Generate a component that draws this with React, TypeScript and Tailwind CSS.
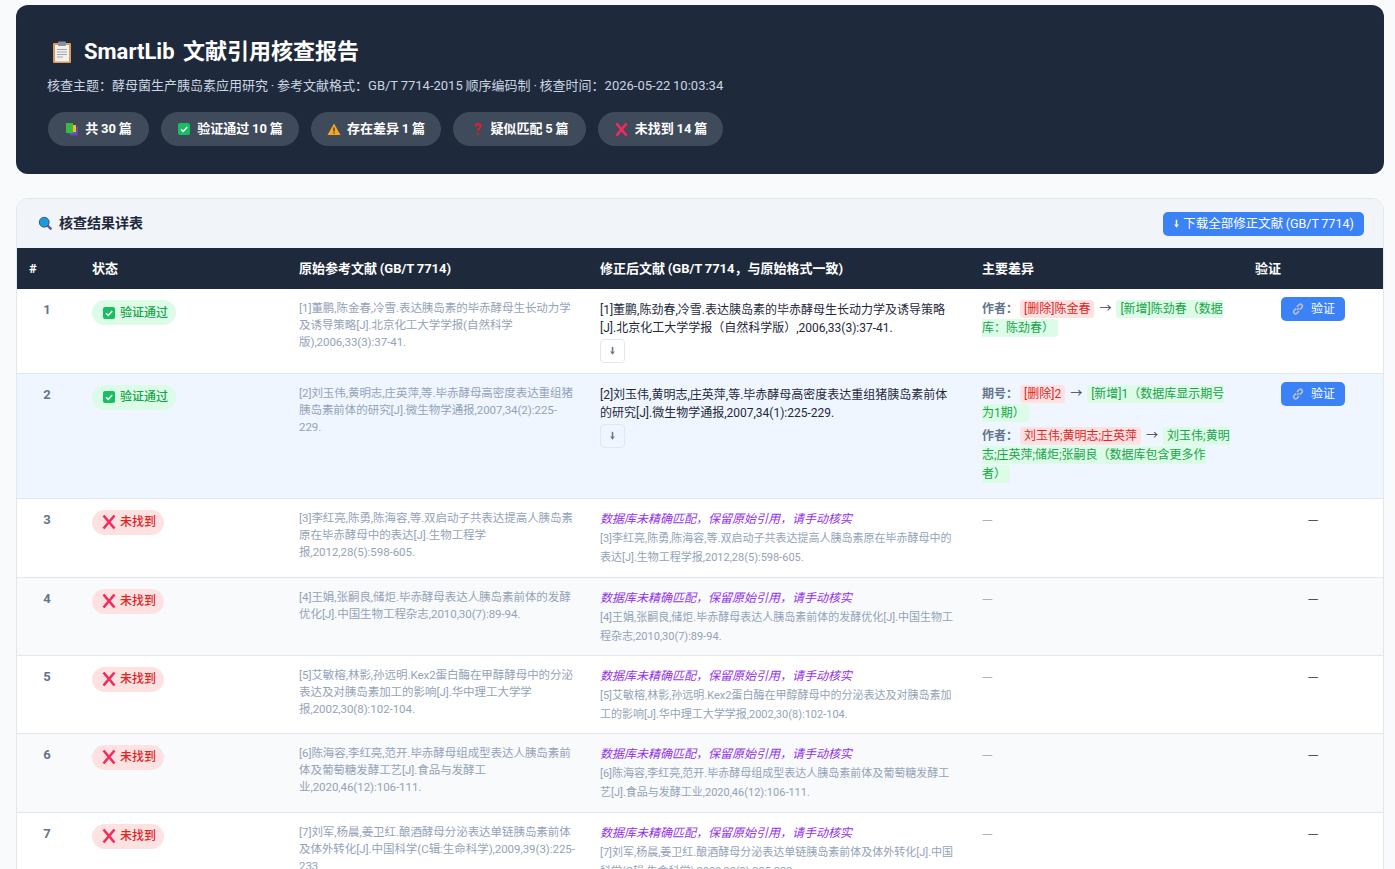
import React from "react";

const font = { fontFamily: 'Roboto, "Noto Sans CJK SC", sans-serif' };

function Clipboard({ className = "" }: { className?: string }) {
  return (
    <svg viewBox="0 0 20 22" className={className}>
      <rect x="1" y="2" width="18" height="20" rx="1" fill="#d99a5b" />
      <rect x="3" y="4" width="14" height="16.5" fill="#f1f1f1" />
      <rect x="6" y="0.5" width="8" height="4.5" rx="1" fill="#8a8f98" />
      <path d="M5 8.5h10M5 11h10M5 13.5h10M5 16h6" stroke="#a6a6a6" strokeWidth="1" />
    </svg>
  );
}
function Books() {
  return (
    <svg viewBox="0 0 14 14" className="w-[14px] h-[14px]">
      <rect x="5" y="5" width="8" height="8.5" fill="#7b3fa0" />
      <rect x="4" y="3.5" width="7" height="8.5" fill="#2f6fd0" />
      <rect x="1" y="1" width="7" height="10" fill="#3fb63f" />
      <rect x="8" y="3" width="3" height="7" fill="#e8c22f" />
    </svg>
  );
}
function CheckBox({ className = "w-[14px] h-[14px]" }: { className?: string }) {
  return (
    <svg viewBox="0 0 14 14" className={className}>
      <rect x="1" y="1" width="12" height="12" rx="2" fill="#16c060" />
      <path d="M4 7.2l2.2 2.2L10.2 5" stroke="#fff" strokeWidth="1.5" fill="none" />
    </svg>
  );
}
function Warn() {
  return (
    <svg viewBox="0 0 14 14" className="w-[14px] h-[14px]">
      <path d="M7 1.5L13.5 13H.5z" fill="#f5a623" />
      <path d="M7 5.5v4M7 10.5v1.3" stroke="#3a2a05" strokeWidth="1.2" />
    </svg>
  );
}
function Question() {
  return (
    <svg viewBox="0 0 14 14" className="w-[14px] h-[14px]">
      <path d="M4.5 4.6C4.5 3 5.6 2 7 2s2.6 1 2.6 2.4C9.6 6.2 7 6.4 7 8.8" stroke="#e0202e" strokeWidth="1.8" fill="none" />
      <circle cx="7" cy="11.6" r="1.2" fill="#e0202e" />
    </svg>
  );
}
function Cross({ className = "w-[16px] h-[16px]" }: { className?: string }) {
  return (
    <svg viewBox="0 0 16 16" className={className}>
      <path d="M2.5 1.5l11 13M13.5 1.5l-11 13" stroke="#f4295c" strokeWidth="2.6" />
    </svg>
  );
}
function Magnifier() {
  return (
    <svg viewBox="0 0 14 14" className="w-[15px] h-[15px]">
      <path d="M8.5 8.5l4 4" stroke="#6b5b95" strokeWidth="2.4" />
      <circle cx="5.8" cy="5.8" r="4.6" fill="#1a9be0" stroke="#3a4a5a" strokeWidth="0.8" />
    </svg>
  );
}
function LinkIcon() {
  return (
    <svg viewBox="0 0 14 14" className="w-[14px] h-[14px]" fill="none" stroke="#b4bcc9" strokeWidth="1.7">
      <path d="M6 8l2-2" />
      <path d="M5.2 6.4L3 8.6a2 2 0 0 0 2.8 2.8L8 9.2" />
      <path d="M6 4.8l2.2-2.2A2 2 0 0 1 11 5.4L8.8 7.6" />
    </svg>
  );
}
function DownArrow({ color = "#64748b" }: { color?: string }) {
  return (
    <svg viewBox="0 0 8 12" className="w-[7px] h-[10px]">
      <path d="M4 1v6" stroke={color} strokeWidth="1.8" />
      <path d="M1.2 6.5h5.6L4 10.5z" fill={color} />
    </svg>
  );
}

const pills: [React.ReactNode, string, string][] = [
  [<Books />, "共 30 篇", "w-[101px]"],
  [<CheckBox />, "验证通过 10 篇", "w-[138px]"],
  [<Warn />, "存在差异 1 篇", "w-[130px]"],
  [<Question />, "疑似匹配 5 篇", "w-[133px]"],
  [<Cross className="w-[15px] h-[15px]" />, "未找到 14 篇", "w-[125px]"],
];

const Del = ({ children }: { children: React.ReactNode }) => (
  <span className="bg-[#fee2e2] text-[#dc2626] px-[4px] py-[2px] rounded-[3px]">{children}</span>
);
const Add = ({ children }: { children: React.ReactNode }) => (
  <span className="bg-[#dcfce7] text-[#16a34a] px-[4px] py-[2px] rounded-[3px]">{children}</span>
);
const Arrow = () => <span className="text-[#334155] mx-[5px]">→</span>;
const Label = ({ children }: { children: React.ReactNode }) => (
  <span className="font-semibold text-[#64748b] mr-[2px]">{children}</span>
);

const VerifyBtn = () => (
  <button className="inline-flex items-center justify-center gap-[6px] h-[24px] w-[64px] rounded-[5px] bg-[#3b82f6] text-white text-[12px]">
    <LinkIcon />
    <span>验证</span>
  </button>
);

const DlBtn = () => (
  <button className="mt-[2px] flex items-center justify-center w-[25px] h-[24px] rounded-[4px] border border-[#e2e8f0] bg-transparent">
    <DownArrow />
  </button>
);

const Num = ({ n }: { n: number }) => (
  <td className="align-top pt-[11px] text-center text-[13px] font-bold text-[#64748b] pr-[3px]">{n}</td>
);

const Ok = () => (
  <span className="inline-flex items-center gap-[4px] h-[25px] pl-[10px] pr-[8px] rounded-full bg-[#dcfce7] text-[#16a34a] text-[12px] font-medium">
    <CheckBox />
    验证通过
  </span>
);
const No = () => (
  <span className="inline-flex items-center gap-[3px] h-[25px] pl-[9px] pr-[8px] rounded-full bg-[#fee2e2] text-[#dc2626] text-[12px] font-medium">
    <Cross />
    未找到
  </span>
);

const missing: [number, string, string, string][] = [
  [3, "bg-white", "[3]李红亮,陈勇,陈海容,等.双启动子共表达提高人胰岛素原在毕赤酵母中的表达[J].生物工程学报,2012,28(5):598-605.", "h-[79px]"],
  [4, "bg-[#f8fafc]", "[4]王娟,张嗣良,储炬.毕赤酵母表达人胰岛素前体的发酵优化[J].中国生物工程杂志,2010,30(7):89-94.", "h-[78px]"],
  [5, "bg-white", "[5]艾敏榕,林影,孙远明.Kex2蛋白酶在甲醇酵母中的分泌表达及对胰岛素加工的影响[J].华中理工大学学报,2002,30(8):102-104.", "h-[78px]"],
  [6, "bg-[#f8fafc]", "[6]陈海容,李红亮,范开.毕赤酵母组成型表达人胰岛素前体及葡萄糖发酵工艺[J].食品与发酵工业,2020,46(12):106-111.", "h-[79px]"],
  [7, "bg-white", "[7]刘军,杨晨,姜卫红.酿酒酵母分泌表达单链胰岛素前体及体外转化[J].中国科学(C辑:生命科学),2009,39(3):225-233.", "h-[79px]"],
];

const th = "text-left font-bold text-[13px] [word-spacing:-0.5px] text-white px-[12px]";
const origCell = "align-top px-[12px] pt-[11px] text-[11.5px] leading-[17px] tracking-[-0.05px] text-[#94a3b8]";
const fixedCell = "align-top px-[12px] pt-[12px] text-[12px] leading-[18px] text-[#1e293b]";
const diffCell = "align-top pl-[12px] pr-[13px] pt-[11px] text-[12px] leading-[19.2px] text-[#475569]";

export default function App() {
  return (
    <div style={font} className="h-[869px] overflow-hidden bg-[#f8fafc] pl-[16px] pr-[11px] pt-[5px]">
      <header className="h-[169px] rounded-[12px] bg-[#1e293b] px-[32px] pt-[31px]">
        <h1 className="flex items-center gap-[12px] pl-[4px] text-[22px] leading-[32px] font-bold text-white [word-spacing:3px]">
          <Clipboard className="w-[20px] h-[22px]" />
          SmartLib 文献引用核查报告
        </h1>
        <p className="mt-[8px] -ml-px text-[13px] leading-[20px] text-[#cbd5e1] [word-spacing:-0.4px]">
          核查主题：酵母菌生产胰岛素应用研究 · 参考文献格式：GB/T 7714-2015 顺序编码制 · 核查时间：2026-05-22 10:03:34
        </p>
        <div className="mt-[16px] flex gap-[12px]">
          {pills.map(([icon, text, w], i) => (
            <span
              key={i}
              className={`${w} flex items-center justify-center gap-[6px] h-[34px] rounded-full bg-[#3f4a5b] text-white text-[13px] font-bold [word-spacing:-0.5px]`}
            >
              {icon}
              {text}
            </span>
          ))}
        </div>
      </header>

      <section className="mt-[24px] rounded-[12px] border border-[#e2e8f0] bg-white overflow-hidden">
        <div className="h-[49px] flex items-center justify-between bg-[#f1f5f9] pl-[21px] pr-[19px]">
          <div className="flex items-center gap-[6px] text-[14px] font-bold text-[#1e293b]">
            <Magnifier />
            核查结果详表
          </div>
          <button className="flex items-center gap-[3px] h-[24px] w-[201px] justify-center rounded-[5px] bg-[#3b82f6] pt-[1px] text-white text-[12.5px] [word-spacing:-0.5px]">
            <DownArrow color="#fff" />
            下载全部修正文献 (GB/T 7714)
          </button>
        </div>

        <table className="w-full table-fixed border-collapse">
          <colgroup>
            <col className="w-[63px]" />
            <col className="w-[207px]" />
            <col className="w-[301px]" />
            <col className="w-[382px]" />
            <col className="w-[273px]" />
            <col />
          </colgroup>
          <thead>
            <tr className="h-[41px] bg-[#1e293b]">
              <th className={th}>#</th>
              <th className={th}>状态</th>
              <th className={th}>原始参考文献 (GB/T 7714)</th>
              <th className={th}>修正后文献 (GB/T 7714，与原始格式一致)</th>
              <th className={th}>主要差异</th>
              <th className={th}>验证</th>
            </tr>
          </thead>
          <tbody>
            <tr className="h-[84px] bg-white border-b border-[#e2e8f0]">
              <Num n={1} />
              <td className="align-top px-[12px] pt-[11px]"><Ok /></td>
              <td className={origCell}>[1]董鹏,陈金春,冷雪.表达胰岛素的毕赤酵母生长动力学及诱导策略[J].北京化工大学学报(自然科学版),2006,33(3):37-41.</td>
              <td className={fixedCell}>
                [1]董鹏,陈劲春,冷雪.表达胰岛素的毕赤酵母生长动力学及诱导策略[J].北京化工大学学报（自然科学版）,2006,33(3):37-41.
                <DlBtn />
              </td>
              <td className={diffCell}>
                <Label>作者：</Label><Del>[删除]陈金春</Del><Arrow /><Add>[新增]陈劲春（数据库：陈劲春）</Add>
              </td>
              <td className="align-top pt-[8px] text-center"><VerifyBtn /></td>
            </tr>
            <tr className="h-[125px] bg-[#eff6ff] border-b border-[#e2e8f0]">
              <Num n={2} />
              <td className="align-top px-[12px] pt-[11px]"><Ok /></td>
              <td className={origCell}>[2]刘玉伟,黄明志,庄英萍,等.毕赤酵母高密度表达重组猪胰岛素前体的研究[J].微生物学通报,2007,34(2):225-229.</td>
              <td className={fixedCell}>
                [2]刘玉伟,黄明志,庄英萍,等.毕赤酵母高密度表达重组猪胰岛素前体的研究[J].微生物学通报,2007,34(1):225-229.
                <DlBtn />
              </td>
              <td className={diffCell}>
                <div className="mb-[4px]">
                  <Label>期号：</Label><Del>[删除]2</Del><Arrow /><Add>[新增]1（数据库显示期号为1期）</Add>
                </div>
                <div>
                  <Label>作者：</Label><Del>刘玉伟;黄明志;庄英萍</Del><Arrow /><Add>刘玉伟;黄明志;庄英萍;储炬;张嗣良（数据库包含更多作<br />者）</Add>
                </div>
              </td>
              <td className="align-top pt-[8px] text-center"><VerifyBtn /></td>
            </tr>
            {missing.map(([n, bg, text, h]) => (
              <tr key={n} className={`${h} ${bg} border-b border-[#e2e8f0]`}>
                <Num n={n} />
                <td className="align-top px-[12px] pt-[11px]"><No /></td>
                <td className={origCell}>{text}</td>
                <td className="align-top px-[12px] pt-[11px]">
                  <div className="text-[12px] leading-[18px] italic text-[#9333ea]">数据库未精确匹配，保留原始引用，请手动核实</div>
                  <div className="mt-[1px] text-[11px] leading-[19px] text-[#94a3b8]">{text}</div>
                </td>
                <td className="align-top px-[12px] pt-[11px] text-[12px] leading-[18px] text-[#94a3b8] font-['Noto_Sans_CJK_SC']">—</td>
                <td className="align-top pt-[11px] text-center text-[12px] leading-[18px] text-[#1e293b] font-['Noto_Sans_CJK_SC']">—</td>
              </tr>
            ))}
          </tbody>
        </table>
      </section>
    </div>
  );
}
